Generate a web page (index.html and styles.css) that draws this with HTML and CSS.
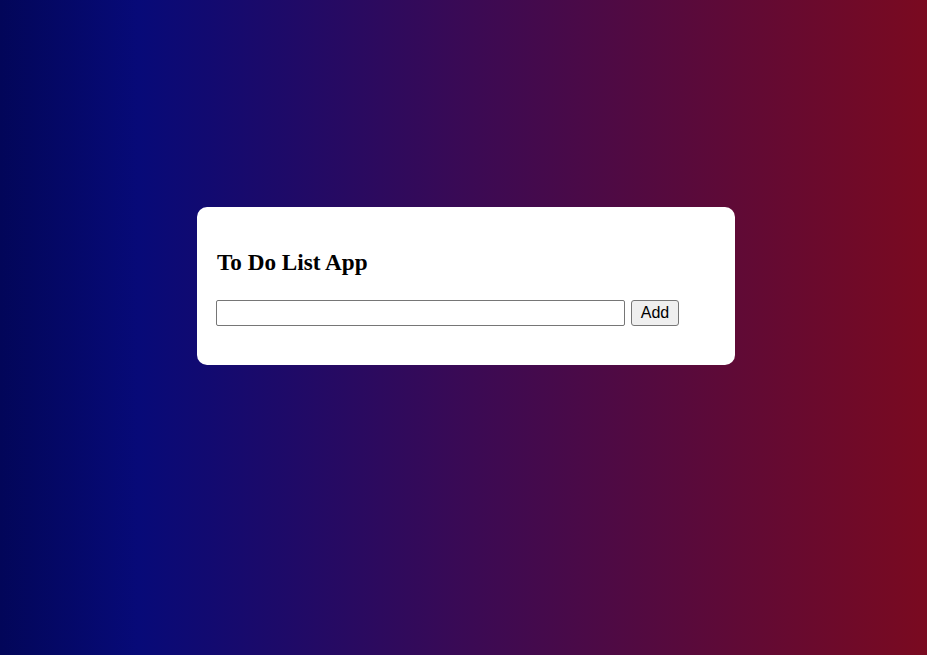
FILE: index.html
```html
<!DOCTYPE html>
<html>
<head>
<meta charset="utf-8">
<link rel="stylesheet" href="styles.css">
</head>
<body>
<div class="card">
  <h2 class="title">To Do List App</h2>
  <div class="row">
    <input class="task" type="text">
    <button class="add">Add</button>
  </div>
</div>
</body>
</html>
```
FILE: styles.css
```css
html, body { margin: 0; height: 100%; }
body {
  background: linear-gradient(to right, #020659 0%, #070a78 15%, #3a0a55 50%, #7a0a20 100%);
  padding: 207px 0 0 197px;
  box-sizing: border-box;
  font-family: "Liberation Serif", serif;
}
.card {
  width: 538px;
  height: 158px;
  box-sizing: border-box;
  background: #fff;
  border-radius: 10px;
  padding: 20px 19px;
}
.title {
  margin: 21px 0 0 1px;
  font-size: 23.2px;
  font-weight: bold;
  line-height: 28px;
  color: #000;
}
.row {
  display: flex;
  gap: 6px;
  margin-top: 24px;
}
.task {
  width: 409px;
  height: 26px;
  box-sizing: border-box;
  border: 1px solid #767676;
  border-radius: 2px;
  margin: 0;
  padding: 1px 2px;
  font-size: 16px;
  font-family: "Liberation Sans", Arial, sans-serif;
}
.add {
  width: 48px;
  height: 26px;
  box-sizing: border-box;
  margin: 0;
  background: #efefef;
  border: 1px solid #767676;
  border-radius: 3px;
  font-size: 16px;
  font-family: "Liberation Sans", Arial, sans-serif;
  color: #000;
  padding: 0;
}
```
